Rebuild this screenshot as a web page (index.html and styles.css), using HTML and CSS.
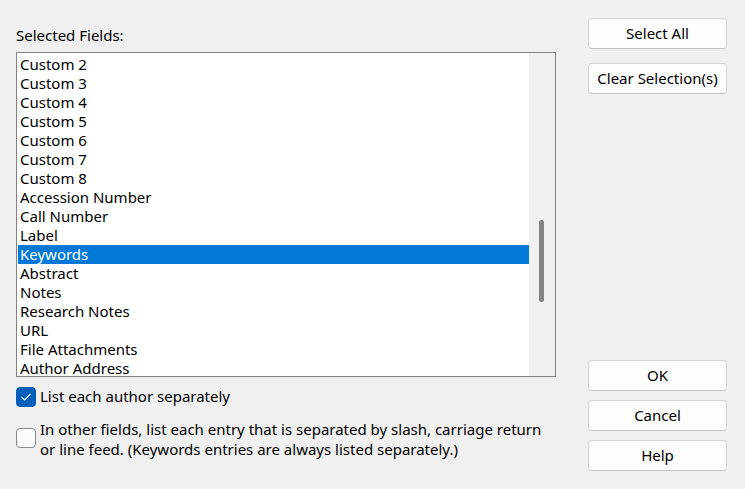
FILE: index.html
```html
<!DOCTYPE html>
<html>
<head>
<meta charset="utf-8">
<link rel="stylesheet" href="styles.css">
</head>
<body>
<div class="dialog">
  <div class="left">
    <div class="label">Selected Fields:</div>
    <div class="listbox">
      <div class="items">
        <div class="item">Custom 2</div>
        <div class="item">Custom 3</div>
        <div class="item">Custom 4</div>
        <div class="item">Custom 5</div>
        <div class="item">Custom 6</div>
        <div class="item">Custom 7</div>
        <div class="item">Custom 8</div>
        <div class="item">Accession Number</div>
        <div class="item">Call Number</div>
        <div class="item">Label</div>
        <div class="item selected">Keywords</div>
        <div class="item">Abstract</div>
        <div class="item">Notes</div>
        <div class="item">Research Notes</div>
        <div class="item">URL</div>
        <div class="item">File Attachments</div>
        <div class="item">Author Address</div>
      </div>
      <div class="scrollbar"><div class="thumb"></div></div>
    </div>
    <label class="check first">
      <span class="box checked"><svg width="12" height="10" viewBox="0 0 12 10"><path d="M1.5 5.2 L4.5 8 L10.5 1.8" fill="none" stroke="#fff" stroke-width="1.1"/></svg></span>
      <span class="ctext">List each author separately</span>
    </label>
    <label class="check second">
      <span class="box"></span>
      <span class="ctext">In other fields, list each entry that is separated by slash, carriage return<br>or line feed. (Keywords entries are always listed separately.)</span>
    </label>
  </div>
  <div class="right">
    <button class="btn">Select All</button>
    <button class="btn gap15">Clear Selection(s)</button>
    <div class="spacer"></div>
    <button class="btn">OK</button>
    <button class="btn gap10">Cancel</button>
    <button class="btn gap10">Help</button>
  </div>
</div>
</body>
</html>
```
FILE: styles.css
```css
html, body {
  margin: 0;
  padding: 0;
  background: #f0f0f0;
  width: 745px;
  height: 489px;
  overflow: hidden;
}
body {
  font-family: "Segoe UI", "Noto Sans", "Open Sans", sans-serif;
  font-size: 15px;
  color: #000;
}
.dialog {
  display: flex;
  height: 489px;
  box-sizing: border-box;
  padding: 0 18px 18px 16px;
  gap: 32px;
}
.left {
  width: 540px;
  display: flex;
  flex-direction: column;
  padding-top: 26px;
}
.label {
  height: 20px;
  line-height: 18px;
  margin-bottom: 6px;
}
.listbox {
  height: 325px;
  box-sizing: border-box;
  border: 1px solid #828282;
  background: #fff;
  display: flex;
  overflow: hidden;
}
.items {
  flex: 1;
  padding: 2px 0 0 1px;
  overflow: hidden;
}
.item {
  height: 19px;
  line-height: 18px;
  padding-left: 2px;
  white-space: nowrap;
}
.item.selected {
  background: #0078d7;
  color: #fff;
}
.scrollbar {
  width: 26px;
  background: #f0f0f0;
  position: relative;
}
.thumb {
  position: absolute;
  left: 10px;
  top: 167px;
  width: 5px;
  height: 82px;
  border-radius: 3px;
  background: #858585;
}
.check {
  display: flex;
  align-items: flex-start;
  gap: 4px;
}
.check.first {
  margin-top: 10px;
  align-items: center;
  height: 20px;
}
.check.first .ctext {
  margin-top: -2px;
}
.check.second {
  margin-top: 21px;
}
.box {
  width: 20px;
  height: 20px;
  box-sizing: border-box;
  border-radius: 4px;
  border: 1px solid #8a8a8a;
  background: #fbfbfb;
  display: flex;
  align-items: center;
  justify-content: center;
  flex: none;
}
.box.checked {
  background: #005fb8;
  border-color: #005fb8;
}
.ctext {
  line-height: 20px;
  white-space: nowrap;
}
.check.second .ctext {
  margin-top: -9px;
}
.right {
  width: 139px;
  display: flex;
  flex-direction: column;
  padding-top: 18px;
}
.spacer {
  flex: 1;
}
.btn {
  font: inherit;
  color: #000;
  height: 31px;
  box-sizing: border-box;
  background: #fdfdfd;
  border: 1px solid #d4d4d4;
  border-bottom-color: #c4c4c4;
  border-radius: 4px;
  padding: 0 0 2px 0;
  flex: none;
}
.gap15 { margin-top: 14px; }
.gap10 { margin-top: 9px; }
```
